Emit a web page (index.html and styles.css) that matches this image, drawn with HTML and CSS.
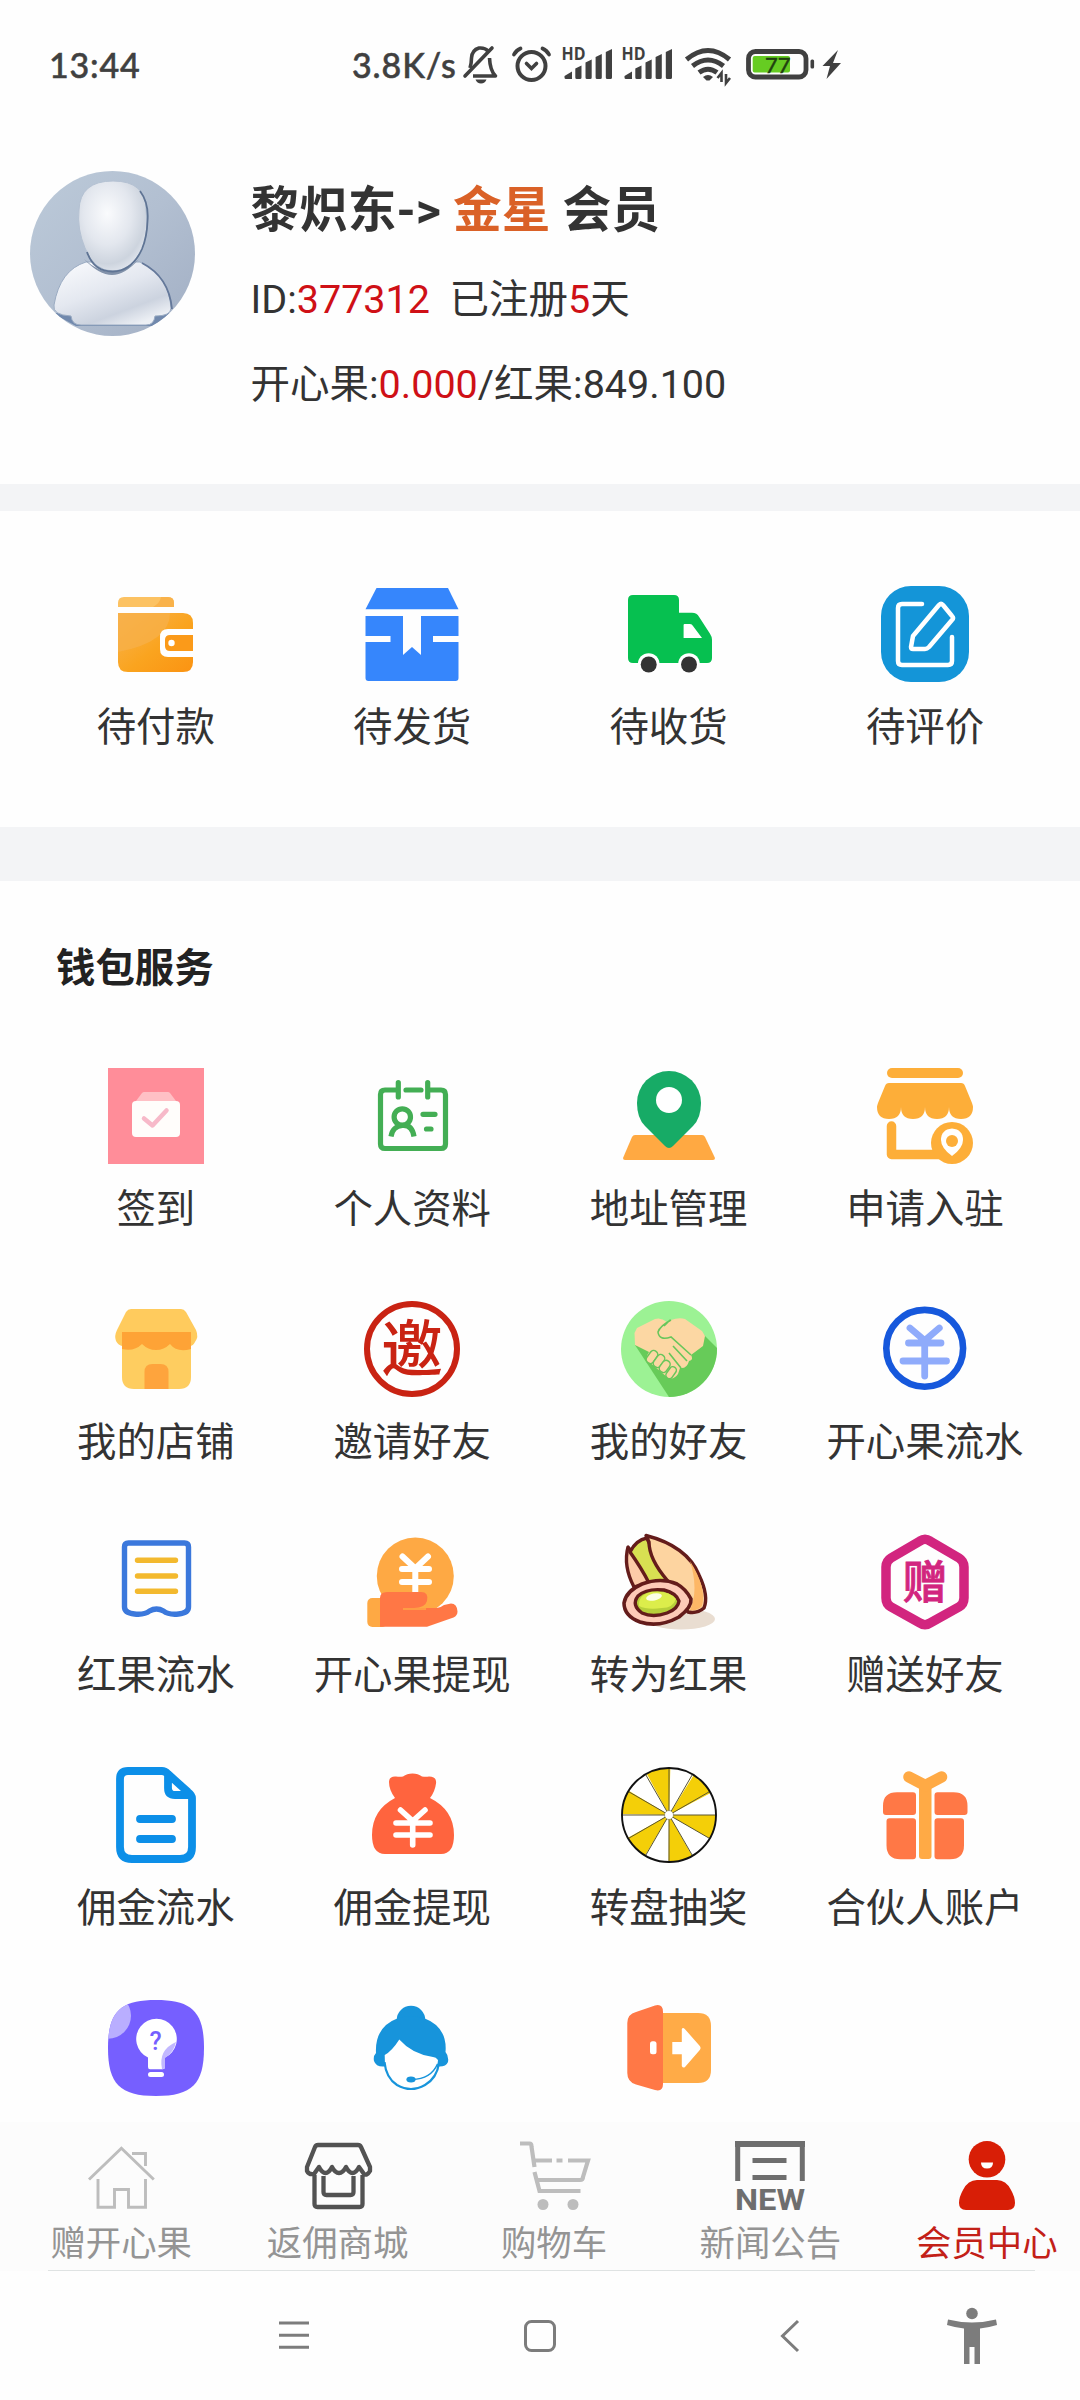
FILE: index.html
```html
<!DOCTYPE html>
<html lang="zh-CN">
<head>
<meta charset="utf-8">
<title>会员中心</title>
<link rel="stylesheet" href="styles.css">
</head>
<body>
<div class="screen">
  <header class="status">
    <span class="status-time">13:44</span>
    <span class="status-speed">3.8K/s</span>
    <svg class="status-icons" width="382" height="44" viewBox="0 0 382 44" fill="none" stroke="#404040">
      <g stroke-width="3.6" stroke-linejoin="round">
        <path d="M13 33h22.500q-5.500-5.500-6-18M10 25Q11.500 20 11.500 15Q12 7 19 5Q25 4.500 28 8"/>
        <path d="M5 33 32 5" stroke-linecap="round"/>
        <path d="M15.500 36.500h11q-1.500 4-5.500 4t-5.500-4z" fill="#404040" stroke="none"/>
      </g>
      <circle cx="71.500" cy="23" r="14" stroke-width="4"/>
      <path d="M66.500 20.500l5 5 5-5" stroke-width="3.600" stroke-linecap="round"/>
      <path d="M54 11.500q2-4 6.500-6M89 11.500q-2-4-6.500-6" stroke-width="3.800" stroke-linecap="round"/>
      <g fill="#404040" stroke="none" class="hd">
        <text x="101.500" y="17" textLength="24" lengthAdjust="spacingAndGlyphs">HD</text><text x="161.500" y="17" textLength="24" lengthAdjust="spacingAndGlyphs">HD</text>
      </g>
      <g fill="#404040" stroke="none">
        <path id="bars" d="M104.500 33l7.500-4.500V36h-6q-1.500 0-1.500-1.500zM115.300 25.500l6.200-3V34.500q0 1.500-1.500 1.500h-3.200q-1.500 0-1.500-1.500zM125.500 19.500l6.200-3V34.500q0 1.500-1.500 1.500h-3.200q-1.500 0-1.500-1.500zM135.600 14l6.200-3V34.500q0 1.500-1.500 1.500h-3.200q-1.500 0-1.500-1.500zM145.800 9l6.200-3V34.500q0 1.500-1.500 1.500h-3.200q-1.500 0-1.500-1.500z"/>
        <use href="#bars" x="60"/>
      </g>
      <path d="M226.500 16.500q21.500-18 43 0M232.500 23q15.500-12 31 0M239 29.500q9-6.500 18 0" stroke-width="5"/>
      <path d="M243 34q5-4 10 0l-3.500 3.500h-3z" fill="#404040" stroke="none"/>
      <path d="M261.500 39v-9l-4 5M266 31v9l4-5" stroke-width="2.600"/>
      <rect x="288.500" y="8.500" width="57.500" height="25.500" rx="7" stroke-width="4.800"/>
      <rect x="292.700" y="13" width="37.300" height="16.500" rx="2" fill="#66cc22" stroke="none"/>
      <rect x="350.500" y="16.500" width="3.600" height="9" rx="1.500" fill="#404040" stroke="none"/>
      <text class="level" x="305" y="29.500">77</text>
      <path d="M378 7 362.500 23h7.500l-3.500 13L381 20h-8z" fill="#404040" stroke="none"/>
    </svg>
  </header>

  <section class="profile">
    <svg class="avatar" width="165" height="165" viewBox="0 0 165 165">
      <defs>
        <clipPath id="disc"><circle cx="82.500" cy="82.500" r="82.500"/></clipPath>
        <linearGradient id="back" x2="1" y2="1"><stop stop-color="#bccad9"/><stop offset=".5" stop-color="#b2bfd1"/><stop offset="1" stop-color="#a2afc4"/></linearGradient>
        <radialGradient id="face" cx=".42" cy=".36" r=".7"><stop stop-color="#fafbfd"/><stop offset=".5" stop-color="#e3e7ee"/><stop offset=".8" stop-color="#cdd4de"/><stop offset="1" stop-color="#e6eaf1"/></radialGradient>
        <linearGradient id="bust" x2=".7" y2="1"><stop stop-color="#fbfcfe"/><stop offset=".5" stop-color="#e4e8f0"/><stop offset=".8" stop-color="#ccd3df"/><stop offset="1" stop-color="#edf0f5"/></linearGradient>
      </defs>
      <g clip-path="url(#disc)">
        <path d="M0 0h165v165H0z" fill="url(#back)"/>
        <path d="M22 142 46 155H124L142 142Z" fill="#7189ad"/>
        <path d="M56 91Q30 99 24 134Q22 144 41 145Q42 154 51 154H116Q124 154 125 145Q141 145 141 137Q139 104 110 91Z" fill="url(#bust)" stroke="#9aabc2" stroke-width="1"/>
        <path d="M112 92Q139 106 142 138" fill="none" stroke="#64789a" stroke-width="1.800"/>
        <path d="M54 88Q82 114 109 88Q95 104 82 104T54 88Z" fill="#8292aa"/>
        <path d="M49 39Q50 10 83 10T116 39Q119 60 112 78Q102 100 83 100T55 77Q47 58 49 39Z" fill="url(#face)" stroke="#b4c1d2" stroke-width="1"/>
        <path d="M110 20Q119 32 117.500 50Q117 66 112 78Q102 100 83 100.500T57 81" fill="none" stroke="#5f7494" stroke-width="1.800"/>
      </g>
    </svg>
    <div class="profile-info">
      <h1 class="profile-name">黎炽东-&gt; <span class="rank">金星</span> 会员</h1>
      <p class="profile-line">ID:<em>377312</em>&nbsp; 已注册<em>5</em>天</p>
      <p class="profile-line">开心果:<em>0.000</em>/红果:849.100</p>
    </div>
  </section>

  <nav class="grid orders">
    <a class="cell">
      <svg class="icon" viewBox="0 0 96 96">
        <defs><linearGradient id="wal" x2="1" y2="1"><stop stop-color="#f9b450"/><stop offset=".55" stop-color="#faa41f"/><stop offset="1" stop-color="#fb9312"/></linearGradient></defs>
        <path d="M10 21v-4q0-6 6-6h44q6 0 6 6v4z" fill="#fcc262"/><path d="M45 21Q52 17 53 11h7q6 0 6 6v4z" fill="#f9b24a"/>
        <path d="M10 27h65q10 0 10 10v39q0 10-10 10H20q-10 0-10-10z" fill="url(#wal)"/>
        <path d="M10 27h52q0 29-52 39z" fill="#f7b04a" opacity=".75"/>
        <path d="M85 43H60q-8 0-8 8v12q0 8 8 8h25z" fill="#fff"/>
        <path d="M85 49H62q-5 0-5 5v6q0 5 5 5h23z" fill="#fb9a19"/><circle cx="63.500" cy="57" r="3.200" fill="#fff"/>
      </svg><span class="label">待付款</span></a>
    <a class="cell">
      <svg class="icon" viewBox="0 0 96 96" fill="#3686fc">
        <path d="M12.500 2h71.500l10.500 21.300H1.500z"/>
        <path d="M1.500 30H39v39l9-8 9 8V30h37.500v20H69v6h25.500v36q0 3-3 3h-87q-3 0-3-3V56h25v-6h-25z"/>
      </svg><span class="label">待发货</span></a>
    <a class="cell">
      <svg class="icon" viewBox="0 0 96 96">
        <path d="M12 9h41q5 0 5 5v12.700h13q5 0 7 4l11 17q2 3 2 6V72q0 5-5 5H12q-5 0-5-5V14q0-5 5-5z" fill="#06c050"/>
        <path d="M62.600 39q0-1 1-1H69q2 0 3 2l9 12H62.600z" fill="#fff"/>
        <circle cx="27.700" cy="78" r="10.800" fill="#fff"/><circle cx="68" cy="78" r="10.800" fill="#fff"/>
        <circle cx="27.700" cy="78.500" r="8" fill="#333"/><circle cx="68" cy="78.500" r="8" fill="#333"/>
      </svg><span class="label">待收货</span></a>
    <a class="cell">
      <svg class="icon" viewBox="0 0 96 96">
        <rect x="4" width="88" height="96" rx="30" fill="#1495d8"/>
        <path d="M45 18H25q-4 0-4 4v53q0 4 4 4h46q4 0 4-4V51M62 19q2-2 4 0l9 11q2 2 0 4L52 61q-2 2-4 2H36q-2 0-2-2l2-11z" fill="none" stroke="#fff" stroke-width="4.500" stroke-linecap="round" stroke-linejoin="round"/>
      </svg><span class="label">待评价</span></a>
  </nav>

  <main class="wallet">
    <h2 class="section-title">钱包服务</h2>
    <div class="grid services">
      <a class="cell">
        <svg class="icon" viewBox="0 0 96 96">
          <path d="M0 0h96v96H0z" fill="#ff8d99"/><path d="M28 33 34 25q1-1 2-1h24q1 0 2 1l6 8z" fill="#ffc0c5"/>
          <rect x="24" y="33" width="48" height="36" rx="4" fill="#fffdfb"/>
          <path d="m36 50.500 8.500 7 14-15" fill="none" stroke="#f7b9c9" stroke-width="4.500" stroke-linecap="round" stroke-linejoin="round"/>
        </svg><span class="label">签到</span></a>
      <a class="cell">
        <svg class="icon" viewBox="0 0 96 96" fill="none" stroke="#43ae54" stroke-width="5.200" stroke-linecap="round">
          <path d="M34.300 22H21q-4.500 0-4.500 4.500v49.500q0 4.500 4.500 4.500h56q4.500 0 4.500-4.500V26.500q0-4.500-4.500-4.500H63.700M34.300 14.500V29M63.700 14.500V29M42 22h15"/>
          <circle cx="38.300" cy="49" r="8.200"/><path d="M27 68.500q1.500-10 11.300-11T50 68.500" stroke-linecap="butt"/>
          <path d="M59 46.300h12M62.500 61h4.500"/>
        </svg><span class="label">个人资料</span></a>
      <a class="cell">
        <svg class="icon" viewBox="0 0 96 96">
          <path d="M14 67h67q2 0 3 2l10 21q0 2-2 2H4q-2 0-2-2l9-21q1-2 3-2z" fill="#ffa942"/>
          <path d="M48 3A32 32 0 0 1 80 35Q80 50 72 58L52 78Q48 82 44 78L24 58Q16 50 16 35A32 32 0 0 1 48 3z" fill="#17ab66"/><circle cx="48" cy="32" r="13" fill="#fff"/>
        </svg><span class="label">地址管理</span></a>
      <a class="cell">
        <svg class="icon" viewBox="0 0 96 96" fill="#fdae39">
          <rect x="10" width="76" height="10" rx="5"/>
          <path d="M12 15h72q3 0 4 3l7 17q1 3 1 4 0 12-12 12t-12-12q0 12-12 12T48 39q0 12-12 12T24 39q0 12-12 12T0 39q0-1 1-4l7-17q1-3 4-3z"/>
          <path d="M14.500 58v28.500H62" fill="none" stroke="#fdae39" stroke-width="9.500" stroke-linecap="round" stroke-linejoin="round"/>
          <circle cx="75" cy="75" r="21"/><path d="M75 88q-11-8-11-16 0-10.500 11-11.500 11 1 11 11.500 0 8-11 16z" fill="#fff"/><circle cx="75" cy="73" r="6"/>
        </svg><span class="label">申请入驻</span></a>

      <a class="cell">
        <svg class="icon" viewBox="0 0 96 96">
          <path d="M14 31h69v45q0 12-12 12H26q-12 0-12-12z" fill="#fecd60"/>
          <path d="M23 8h50q3 0 5 3l10 18q3 7-1 12-2 4-5 4V31H14v14q-4-1-6-5-2-5 1-11L18 11q2-3 5-3z" fill="#ffcb5d"/>
          <path d="M14 31h69v17q-14 4-21-5-6 6-14 6-8 0-14-6-8 8-20 5z" fill="#fea336"/>
          <path d="M36.500 88V71q0-8 8-8h8q8 0 8 8v17z" fill="#fea43d"/>
        </svg><span class="label">我的店铺</span></a>
      <a class="cell">
        <svg class="icon" viewBox="0 0 96 96">
          <circle cx="48" cy="48" r="45" fill="none" stroke="#c92313" stroke-width="6"/><text class="seal seal-red" x="48" y="70.500">邀</text>
        </svg><span class="label">邀请好友</span></a>
      <a class="cell">
        <svg class="icon" viewBox="0 0 96 96">
          <circle cx="48" cy="48" r="48" fill="#9cf294"/>
          <path d="M83 34 96 47A48 48 0 0 1 48 96L14 44z" fill="#67cb59"/>
          <path d="M14 44 13.500 32 16 27 34 18Q40 16 46 21L50 19Q58 16 64 18L81 30 84 35 82 45 70 54Q73 59 68 60Q66 68 59 67L57 73Q52 80 46 76L27 60Q24 57 28 51Z" fill="#fcd7a3"/>
          <path d="M50 19Q39 25 37 31Q38 40 50 36L70 54M52 45 66 60M48 52 60 67M49 19 43 25" fill="none" stroke="#68c65b" stroke-width="1.600"/>
          <g fill="#fcd7a3" stroke="#68c65b" stroke-width="1.500"><rect x="27" y="49" width="8" height="14" rx="4" transform="rotate(35 31 56)"/><rect x="34" y="53" width="8" height="14" rx="4" transform="rotate(35 38 60)"/><rect x="40" y="59" width="8" height="13" rx="4" transform="rotate(35 44 65)"/><rect x="47" y="65" width="7" height="13" rx="3.500" transform="rotate(35 50 71)"/></g>
        </svg><span class="label">我的好友</span></a>
      <a class="cell">
        <svg class="icon" viewBox="0 0 96 96" fill="none">
          <circle cx="47.700" cy="47.300" r="38.400" stroke="#1658dc" stroke-width="6.600"/>
          <path d="m33 27 14.700 12.500L62.300 27M31.500 42H64M26 60h43.500M47.700 40v35" stroke="#8fabfb" stroke-width="6.800" stroke-linecap="round"/>
        </svg><span class="label">开心果流水</span></a>

      <a class="cell">
        <svg class="icon" viewBox="0 0 96 96" fill="none" stroke-width="5.400" stroke-linecap="round" stroke-linejoin="round">
          <path d="M20.500 9h56q4 0 4 4v60q0 6-10 7-10 1-15-3-7-4-14 0-5 4-15 3-10-1-10-7V13q0-4 4-4z" stroke="#3b78dc"/>
          <path d="M29.500 26.300h38M29.500 42h38M29.500 57.300h38" stroke="#f3b92e"/>
        </svg><span class="label">红果流水</span></a>
      <a class="cell">
        <svg class="icon" viewBox="0 0 96 96">
          <circle cx="51.300" cy="42" r="38.500" fill="#fea944"/>
          <path d="m38.500 22.500 12.800 12L64 22.500M38 35h27M38 48h27M51.300 35v24" fill="none" stroke="#fff" stroke-width="6" stroke-linecap="round"/>
          <rect x="3.300" y="64" width="20" height="29" rx="5" fill="#fea944"/>
          <path d="M16 64q0-6 7-6h34q8 0 6 9-2 7-13 7h23q3 0 7-3l7-1.500q6 0 6.500 8 0 4-4 6L63 92.700H16z" fill="#ff7745"/>
          <path d="M39 75h23" stroke="#fea944" stroke-width="1.500"/>
        </svg><span class="label">开心果提现</span></a>
      <a class="cell">
        <svg class="icon" viewBox="0 0 96 96" stroke-linejoin="round">
          <ellipse cx="60" cy="85" rx="34" ry="10.500" fill="#e9ddd1"/>
          <g stroke="#641c1b" stroke-width="3.400">
            <path d="M7 13Q2 32 13 53L32 49 10 17Z" fill="#fdcba8"/>
            <path d="M9 18Q15 6 26 4L38 32 46 46 28 49Q21 35 9 18Z" fill="#d8e052"/>
            <path d="M25 1.500Q66 12 78 41Q88 62 83 74Q76 80 67 78L46 46Q28 25 28 8Z" fill="#fdd4a0"/>
          </g>
          <path d="M69 27Q86 54 81 72Q77 77 69 76Q78 56 69 27Z" fill="#fdb766"/>
          <path d="M70 65Q71 73 58 83Q38 94 19 88Q3 82 3 69Q5 57 21 50Q40 43 56 50Q65 55 70 65Z" fill="#fdcab7" stroke="#641c1b" stroke-width="3.600"/>
          <path d="M58 67Q57 75 46 79Q32 84 21 79Q10 71 17 62Q26 54 43 56Q55 59 58 67Z" fill="#b7cf3a" stroke="#641c1b" stroke-width="3.400"/>
          <path d="M55 65Q52 74 41 74Q26 76 18 72Q17 61 30 58Q48 56 55 65Z" fill="#dced4b"/><ellipse cx="33" cy="63" rx="8" ry="3.500" fill="#fcffe5" transform="rotate(-12 33 63)"/>
        </svg><span class="label">转为红果</span></a>
      <a class="cell">
        <svg class="icon" viewBox="0 0 96 96">
          <path d="M43 7q5-3.500 10 0l29 17q5 3 5 9v31q0 6-5 9L53 89q-5 3.500-10 0L14 73q-5-3-5-9V33q0-6 5-9z" fill="none" stroke="#d2257f" stroke-width="9.500"/><text class="seal seal-pink" x="48" y="64.500">赠</text>
        </svg><span class="label">赠送好友</span></a>

      <a class="cell">
        <svg class="icon" viewBox="0 0 96 96" fill="none" stroke="#0c8fe8" stroke-width="7.800" stroke-linecap="round" stroke-linejoin="round">
          <path d="M20 4h34q3 0 6 3l20 18q4 3 4 6v49q0 12-12 12H24q-12 0-12-12V12q0-8 8-8zM60 9v12q0 7 7 7h14M32 52h32M32 72h32"/>
        </svg><span class="label">佣金流水</span></a>
      <a class="cell">
        <svg class="icon" viewBox="0 0 96 96">
          <path d="M25 15q0-6 7-5.500 4 .5 7 0 4-3 9.500-3t9.500 3q4 .5 7 0 8 0 7 7-1 8-6 14.500Q90 43 90 68q0 19-13 19H21Q8 87 8 68q0-25 23-37-6-8-6-16z" fill="#ff643e"/>
          <path d="m36.500 43 12.200 11L61 43M32 56h34M32 68h34M48.700 54v24" fill="none" stroke="#fff" stroke-width="5.600" stroke-linecap="round"/>
        </svg><span class="label">佣金提现</span></a>
      <a class="cell">
        <svg class="icon" viewBox="0 0 96 96">
          <circle cx="48" cy="48" r="47" fill="#fff"/><circle cx="48" cy="48" r="23.500" fill="none" stroke="#f4cf08" stroke-width="47" stroke-dasharray="12.304"/>
          <path d="M48 1v94M1 48h94M24.500 7.300l47 81.400M71.500 7.300l-47 81.400M7.300 24.500l81.400 47M7.300 71.500l81.400-47" stroke="#5a5530" stroke-width="1"/>
          <circle cx="48" cy="48" r="4.500" fill="#fff" stroke="#887f43" stroke-width=".7"/><circle cx="48" cy="48" r="47" fill="none" stroke="#111" stroke-width="1.900"/>
        </svg><span class="label">转盘抽奖</span></a>
      <a class="cell">
        <svg class="icon" viewBox="0 0 96 96" fill="#ff7846">
          <path d="M20 25.300h16q3 0 3 3v16.700q0 3-3 3H9q-3 0-3-3v-6q0-13.700 14-13.700zM76.500 25.300h-16q-3 0-3 3v16.700q0 3 3 3h27q3 0 3-3v-6q0-13.700-14-13.700zM12.500 51.300H36q3 0 3 3v35q0 3-3 3H23.500q-14 0-14-14v-24q0-3 3-3zM84 51.300H60.500q-3 0-3 3v35q0 3 3 3H73q14 0 14-14v-24q0-3-3-3z"/>
          <path d="M42 19h12.500v70q0 3-3 3H45q-3 0-3-3z" fill="#ffaa45"/><path d="m32 10 16.300 8.500L64.500 10" fill="none" stroke="#ffaa45" stroke-width="11.500" stroke-linecap="round"/>
        </svg><span class="label">合伙人账户</span></a>

      <a class="cell">
        <svg class="icon" viewBox="0 0 96 96">
          <defs><path id="tile" d="M48 0C84 0 96 12 96 48S84 96 48 96 0 84 0 48 12 0 48 0z"/><clipPath id="tile-clip"><use href="#tile"/></clipPath></defs>
          <use href="#tile" fill="#765fff"/><circle cx="0" cy="15.700" r="23" fill="#b9aeff" clip-path="url(#tile-clip)"/>
          <path d="M40 57.500A20.300 20.300 0 1 1 57 57.500V67q0 2.300-2.300 2.300H42Q40 69.300 40 67z" fill="#fff"/>
          <path d="M68 42Q66 52 57 58v9q0 2-3 2 -4-19 14-27z" fill="#c2b8ff"/><rect x="40" y="72" width="16" height="5" rx="2.500" fill="#fff"/>
          <text class="query" x="47.700" y="50">?</text>
        </svg></a>
      <a class="cell">
        <svg class="icon" viewBox="0 0 96 96" fill="#1794db">
          <circle cx="47" cy="20" r="14.300"/><path d="M12 53Q11 35 22 25Q33 16 47 16T72 25Q83 35 81.500 52Q85 56 84 62Q82 67 74 66.500H20Q12 67 10 61Q9 56 12 53z"/>
          <path d="M35.300 39.500Q28 51 20.700 55Q20 69 28 78Q36 87 47 87T66 78Q74 70 74 60Q72 57 69 57Q48 54 35.300 39.500z" fill="#fff"/>
          <path d="M20.500 62Q22 78 33 85Q47 93 61 85Q73 78 75 63" fill="none" stroke="#1794db" stroke-width="2.200"/>
          <ellipse cx="47" cy="79.500" rx="4.600" ry="3"/><path d="M48 79.500Q67 79 73.500 64" fill="none" stroke="#1794db" stroke-width="1.500"/>
        </svg></a>
      <a class="cell">
        <svg class="icon" viewBox="0 0 96 96">
          <path d="M38 13h39q13 0 13 13v44q0 13-13 13H38z" fill="#ffab47"/>
          <path d="M6.300 23Q6.500 14 15 12L34 5.500Q42 3.500 42 12V84Q42 92 34 90L15 84.500Q6.300 82 6.300 73z" fill="#ff7846"/>
          <rect x="29" y="41.300" width="6.500" height="13" rx="2.500" fill="#fff"/>
          <path d="M51.300 42h9.500V29q1-2 3 0l15 17q1.500 2 0 4L64 67q-2 1.500-3.200-1V54.300h-9.500z" fill="#fff"/>
        </svg></a>
    </div>
  </main>

  <nav class="tabs">
    <a class="tab">
      <svg class="tab-icon" viewBox="0 0 70 70" fill="none" stroke="#bdbdbd" stroke-width="2.900">
        <path d="M3 38.500 35.400 7.300 67.800 38.500M12 38v28.200h16.500V48.500h14v17.700h17V38M46 12.500h13.500V25"/>
      </svg><span class="tab-label">赠开心果</span></a>
    <a class="tab">
      <svg class="tab-icon" viewBox="0 0 70 70" fill="none" stroke="#525252" stroke-width="4.300" stroke-linejoin="round">
        <path d="M15 4h40q2 0 3 2l9 20v4q-3 5-6 3l-5-7q-3 6-6.500 6t-6.500-6q-3 6-7 6t-7-6q-3 6-6.500 6t-6.500-6l-5 7q-5 1-7-3v-4L12 6q1-2 3-2zM11.500 34v29q0 3 3 3h42q3 0 3-3V34M20.500 35v16q0 3 3 3h24q3 0 3-3V35"/>
      </svg><span class="tab-label">返佣商城</span></a>
    <a class="tab">
      <svg class="tab-icon" viewBox="0 0 70 70" fill="none" stroke="#bdbdbd" stroke-width="4.200">
        <path d="M1 2.500h9.500q2 0 2 3L15.500 26M15.500 31l5 19h41M18 39h43q3 0 3-3L69 19.500H49M16 19.500h17M37.500 19.500h6"/>
        <circle cx="24" cy="63.500" r="5.500" fill="#bdbdbd" stroke="none"/><circle cx="54" cy="63.500" r="5.500" fill="#bdbdbd" stroke="none"/>
      </svg><span class="tab-label">购物车</span></a>
    <a class="tab">
      <svg class="tab-icon" viewBox="0 0 70 70" fill="none" stroke="#6e6e6e">
        <path d="M2.700 40V0M67.300 40V0M17.500 19.500h34M17.500 36.500h34" stroke-width="5"/><path d="M0 3h70" stroke-width="6"/>
        <text class="new" x="35" y="69" textLength="70" lengthAdjust="spacingAndGlyphs">NEW</text>
      </svg><span class="tab-label">新闻公告</span></a>
    <a class="tab tab-active">
      <svg class="tab-icon" viewBox="0 0 70 70" fill="#d81e06">
        <circle cx="35" cy="18.300" r="18.300"/><path d="M29 21.500h12q0 6-6 6t-6-6z" fill="#fff"/>
        <path d="M25 39h20q9 0 14 10 4 7 4 13 0 7-7 7H14q-7 0-7-7 0-6 4-13 5-10 14-10z"/>
      </svg><span class="tab-label">会员中心</span></a>
  </nav>

  <footer class="system">
    <svg class="key key-menu" width="32" height="32" viewBox="0 0 32 32"><path d="M1 3h30M1 15.300h30M1 27.300h30"/></svg>
    <svg class="key key-home" width="32" height="32" viewBox="0 0 32 32"><rect x="1.500" y="1.500" width="29" height="29" rx="6"/></svg>
    <svg class="key key-back" width="20" height="34" viewBox="0 0 20 34"><path d="M18 2 2.500 17 18 32"/></svg>
    <svg class="key-access" width="50" height="58" viewBox="0 0 50 58"><circle cx="25" cy="6.500" r="5.800"/><path d="M1 12.500Q25 18.500 49 12.500L50 18Q42 20.500 33 21.500V57h-5.500V40h-5v17H17V21.500Q8 20.500 0 18z"/></svg>
  </footer>
</div>
</body>
</html>
```
FILE: styles.css
```css
* {
  box-sizing: border-box;
}

body {
  margin: 0;
  background: #fefefe;
  color: #333;
  font-family: Roboto, "Noto Sans CJK SC", sans-serif;
}

svg {
  overflow: visible;
}

.screen {
  width: 1080px;
  height: 2400px;
  overflow: hidden;
  display: flex;
  flex-direction: column;
}

/* Status bar */
.status {
  height: 128px;
  padding: 43px 0 0 49px;
  display: flex;
  align-items: flex-start;
  color: #404040;
  font-family: Lato, sans-serif;
  font-size: 34px;
  font-weight: 500;
  line-height: 43px;
}

.status-time {
  width: 303px;
  letter-spacing: 0.8px;
  -webkit-text-stroke: 0.5px #404040;
}

.status-speed {
  width: 108px;
  letter-spacing: 0.9px;
  -webkit-text-stroke: 0.5px #404040;
}

.hd {
  font: 700 17px "Open Sans", sans-serif;
}

.level {
  font: 400 22px Lato, sans-serif;
  fill: #1f4010;
  stroke: #1f4010;
  stroke-width: 0.5px;
}

/* Member profile */
.profile {
  height: 356px;
  padding: 43px 30px 0;
  display: flex;
  align-items: flex-start;
  gap: 55.5px;
}

.profile-info {
  padding-top: 8px;
}

.profile-name {
  margin: 0;
  font-size: 48.7px;
  line-height: 64px;
  white-space: nowrap;
}

.rank {
  color: #da6127;
}

.profile-line {
  margin: 0;
  padding-top: 25px;
  font-size: 39.5px;
  line-height: 60px;
  white-space: nowrap;
}

.profile-name + .profile-line {
  padding-top: 27px;
}

.profile-line em {
  color: #cf1016;
  font-style: normal;
}

/* Icon grids */
.grid {
  display: grid;
  grid-template-columns: repeat(4, 256.4px);
  padding-left: 27.6px;
}

.cell {
  height: 233px;
  display: flex;
  flex-direction: column;
  align-items: center;
  gap: 22px;
}

.icon {
  width: 96px;
  height: 96px;
  flex: none;
}

.label {
  font-family: "Noto Sans CJK SC", sans-serif;
  font-size: 39.4px;
  line-height: 40px;
  white-space: nowrap;
}

.orders {
  height: 397px;
  padding-top: 75px;
  border-top: 27px solid #f3f4f6;
  border-bottom: 54px solid #f3f4f6;
  align-content: start;
}

/* Wallet services */
.wallet {
  height: 1241px;
  overflow: hidden;
}

.section-title {
  margin: 0;
  padding: 54px 0 0 56px;
  height: 187px;
  color: #222;
  font-family: "Noto Sans CJK SC", sans-serif;
  font-size: 39.4px;
  font-weight: 700;
  line-height: 60px;
}

.seal {
  font-family: "Noto Sans CJK SC", sans-serif;
  text-anchor: middle;
}

.seal-red {
  font-size: 62px;
  font-weight: 500;
  fill: #c92313;
}

.seal-pink {
  font-size: 45px;
  font-weight: 500;
  fill: #d2257f;
  stroke: #d2257f;
  stroke-width: 0.8px;
}

.query {
  font: 500 25px Roboto, sans-serif;
  text-anchor: middle;
  fill: #765fff;
}

/* Tab bar */
.tabs {
  height: 149px;
  padding: 19px 0 0 13px;
  display: grid;
  grid-template-columns: repeat(5, 216.4px);
  background: linear-gradient(#dfe3e3, #dfe3e3) 48px 100% / 987px 1px no-repeat #fcfcfc;
}

.tab {
  display: flex;
  flex-direction: column;
  align-items: center;
  gap: 11px;
  color: #949494;
}

.tab-active {
  color: #c32017;
}

.tab-icon {
  width: 70px;
  height: 70px;
  flex: none;
}

.tab-label {
  font-family: "Noto Sans CJK SC", sans-serif;
  font-size: 35.4px;
  line-height: 38px;
  white-space: nowrap;
}

.new {
  font: 700 29px Roboto, sans-serif;
  text-anchor: middle;
  fill: #6e6e6e;
  stroke: none;
}

/* System navigation keys */
.system {
  height: 129px;
  padding: 0 83px 0 278px;
  display: flex;
  align-items: center;
}

.key {
  fill: none;
  stroke: #7c7c7c;
  stroke-width: 3;
}

.key-home {
  margin-left: 214px;
}

.key-back {
  margin-left: 224px;
}

.key-access {
  margin-left: auto;
  fill: #7c7c7c;
}
```
